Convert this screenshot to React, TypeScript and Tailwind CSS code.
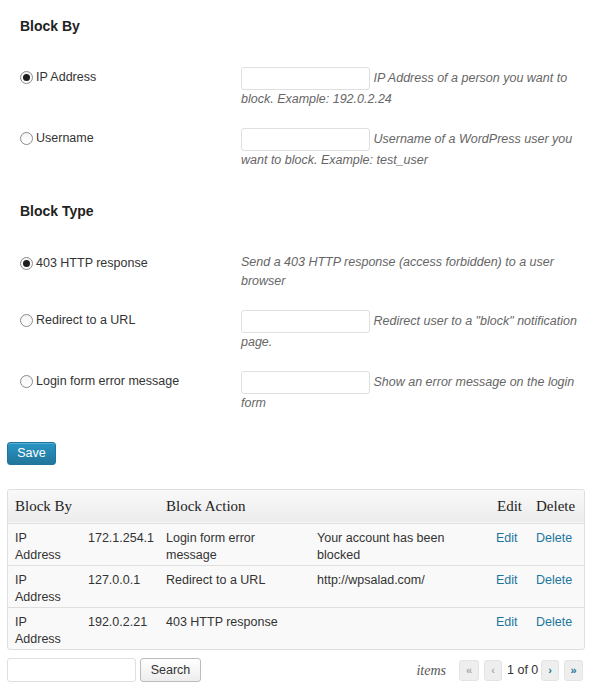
import React from "react";

const sans = { fontFamily: '"Liberation Sans", Arial, sans-serif' };
const serif = { fontFamily: '"Liberation Serif", Georgia, serif' };

function Radio({ checked }: { checked?: boolean }) {
  return (
    <span className="inline-flex items-center justify-center w-[13px] h-[13px] rounded-full border border-[#8a8a8a] bg-gradient-to-b from-[#f4f4f4] to-white mr-[3px] shrink-0">
      {checked && <span className="block w-[7px] h-[7px] rounded-full bg-[#1e1e1e]" />}
    </span>
  );
}

function TextInput({ w = "w-[129px]" }: { w?: string }) {
  return (
    <input
      type="text"
      className={`${w} h-[23px] border border-[#dfdfdf] rounded-[3px] bg-white align-middle outline-none`}
    />
  );
}

function Row({
  label,
  checked,
  input,
  desc,
  h,
}: {
  label: string;
  checked?: boolean;
  input?: boolean;
  desc: string;
  h: string;
}) {
  return (
    <div className={`flex ${h}`}>
      <div className="w-[230px] pl-[20px] pt-[9px] shrink-0">
        <div className="flex items-center leading-[19px] text-[12.5px] text-[#333]">
          <Radio checked={checked} />
          <span>{label}</span>
        </div>
      </div>
      <div className="flex-1 pl-[11px] pr-[8px] pt-[8px] text-[12.5px] leading-[19px] italic text-[#666]">
        {input && (
          <>
            <TextInput />{" "}
          </>
        )}
        <span>{desc}</span>
      </div>
    </div>
  );
}

function PageBtn({ children, disabled, w }: { children: React.ReactNode; disabled?: boolean; w: string }) {
  return (
    <span
      className={`inline-flex items-center justify-center h-[21px] ${w} rounded-[3px] border border-[#e3e3e3] bg-[#eeeeee] text-[11px] font-bold ${
        disabled ? "text-[#aaa]" : "text-[#21759b]"
      }`}
    >
      {children}
    </span>
  );
}

const rows = [
  ["IP Address", "172.1.254.1", "Login form error message", "Your account has been blocked"],
  ["IP Address", "127.0.0.1", "Redirect to a URL", "http://wpsalad.com/"],
  ["IP Address", "192.0.2.21", "403 HTTP response", ""],
];

export default function App() {
  return (
    <div className="w-[590px] h-[700px] bg-white text-[#333]" style={sans}>
      <div className="pt-[17px]">
        <h3 className="pl-[20px] text-[14px] font-bold leading-[19px] text-[#222]">Block By</h3>
        <div className="mt-[23px]">
          <Row h="h-[61px]" label="IP Address" checked input desc="IP Address of a person you want to block. Example: 192.0.2.24" />
          <Row h="h-[61px]" label="Username" input desc="Username of a WordPress user you want to block. Example: test_user" />
        </div>
        <h3 className="pl-[20px] mt-[21px] text-[14px] font-bold leading-[19px] text-[#222]">Block Type</h3>
        <div className="mt-[24px]">
          <Row h="h-[57px]" label="403 HTTP response" checked desc="Send a 403 HTTP response (access forbidden) to a user browser" />
          <Row h="h-[61px]" label="Redirect to a URL" input desc={'Redirect user to a "block" notification page.'} />
          <Row h="h-[61px]" label="Login form error message" input desc="Show an error message on the login form" />
        </div>
      </div>

      <div className="pl-[7px] mt-[18px]">
        <button className="block w-[49px] h-[23px] rounded-[3px] border border-[#21759b] bg-gradient-to-b from-[#2a95c5] to-[#21759b] text-white text-[12.5px] leading-none shadow-[inset_0_1px_0_rgba(120,200,230,0.5)]">
          Save
        </button>
      </div>

      <div className="mx-[7px] mt-[24px] w-[578px] border border-[#dfdfdf] rounded-[3px] bg-[#f9f9f9] overflow-hidden">
        <table className="w-full table-fixed border-collapse text-[12.5px] text-[#333]">
          <colgroup>
            <col className="w-[73px]" />
            <col className="w-[78px]" />
            <col className="w-[151px]" />
            <col className="w-[179px]" />
            <col className="w-[40px]" />
            <col className="w-[55px]" />
          </colgroup>
          <thead>
            <tr className="h-[33px] bg-gradient-to-b from-[#f9f9f9] to-[#ececec] border-b border-[#dfdfdf]">
              <th colSpan={2} className="text-left font-normal pl-[7px] text-[15px] text-[#222]" style={serif}>
                Block By
              </th>
              <th colSpan={2} className="text-left font-normal pl-[7px] text-[15px] text-[#222]" style={serif}>
                Block Action
              </th>
              <th className="text-left font-normal pl-[8px] text-[15px] text-[#222]" style={serif}>
                Edit
              </th>
              <th className="text-left font-normal pl-[7px] text-[15px] text-[#222]" style={serif}>
                Delete
              </th>
            </tr>
          </thead>
          <tbody>
            {rows.map((r, i) => (
              <tr key={i} className={`h-[42px] ${i < rows.length - 1 ? "border-b border-[#dfdfdf]" : ""} border-t border-t-white`}>
                <td className="align-top pl-[7px] pr-[10px] pt-[6px] leading-[17px]">{r[0]}</td>
                <td className="align-top pl-[7px] pt-[6px] leading-[17px]">{r[1]}</td>
                <td className="align-top pl-[7px] pr-[10px] pt-[6px] leading-[17px]">{r[2]}</td>
                <td className="align-top pl-[7px] pr-[20px] pt-[6px] leading-[17px]">{r[3]}</td>
                <td className="align-top pl-[7px] pt-[6px] leading-[17px] text-[#21759b]">Edit</td>
                <td className="align-top pl-[7px] pt-[6px] leading-[17px] text-[#21759b]">Delete</td>
              </tr>
            ))}
          </tbody>
        </table>
      </div>

      <div className="flex items-center mx-[7px] mt-[8px] w-[578px]">
        <TextInput w="w-[129px] h-[24px]" />
        <button className="ml-[4px] w-[61px] h-[24px] rounded-[3px] border border-[#bbb] bg-gradient-to-b from-white to-[#ededed] text-[12.5px] text-[#333]">
          Search
        </button>
        <div className="flex-1" />
        <span className="italic text-[14px] text-[#555] mr-[13px]" style={serif}>
          items
        </span>
        <div className="flex items-center gap-[5px] mr-[2px]">
          <PageBtn disabled w="w-[20px]">«</PageBtn>
          <PageBtn disabled w="w-[18px]">‹</PageBtn>
          <span className="text-[12.5px] text-[#333] w-[29px] text-center whitespace-nowrap">1 of 0</span>
          <PageBtn w="w-[18px]">›</PageBtn>
          <PageBtn w="w-[19px]">»</PageBtn>
        </div>
      </div>
    </div>
  );
}
